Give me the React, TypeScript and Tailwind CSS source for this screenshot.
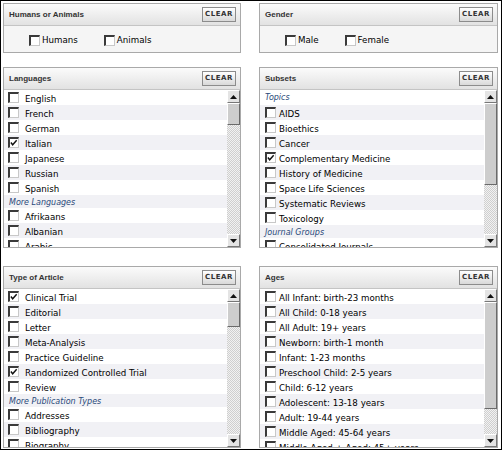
import React from 'react';

type Row = { label: string; checked?: boolean; group?: boolean };

const languages: Row[] = [
  { label: 'English' },
  { label: 'French' },
  { label: 'German' },
  { label: 'Italian', checked: true },
  { label: 'Japanese' },
  { label: 'Russian' },
  { label: 'Spanish' },
  { label: 'More Languages', group: true },
  { label: 'Afrikaans' },
  { label: 'Albanian' },
  { label: 'Arabic' },
];

const subsets: Row[] = [
  { label: 'Topics', group: true },
  { label: 'AIDS' },
  { label: 'Bioethics' },
  { label: 'Cancer' },
  { label: 'Complementary Medicine', checked: true },
  { label: 'History of Medicine' },
  { label: 'Space Life Sciences' },
  { label: 'Systematic Reviews' },
  { label: 'Toxicology' },
  { label: 'Journal Groups', group: true },
  { label: 'Consolidated Journals' },
];

const articleTypes: Row[] = [
  { label: 'Clinical Trial', checked: true },
  { label: 'Editorial' },
  { label: 'Letter' },
  { label: 'Meta-Analysis' },
  { label: 'Practice Guideline' },
  { label: 'Randomized Controlled Trial', checked: true },
  { label: 'Review' },
  { label: 'More Publication Types', group: true },
  { label: 'Addresses' },
  { label: 'Bibliography' },
  { label: 'Biography' },
];

const ages: Row[] = [
  { label: 'All Infant: birth-23 months' },
  { label: 'All Child: 0-18 years' },
  { label: 'All Adult: 19+ years' },
  { label: 'Newborn: birth-1 month' },
  { label: 'Infant: 1-23 months' },
  { label: 'Preschool Child: 2-5 years' },
  { label: 'Child: 6-12 years' },
  { label: 'Adolescent: 13-18 years' },
  { label: 'Adult: 19-44 years' },
  { label: 'Middle Aged: 45-64 years' },
  { label: 'Middle Aged + Aged: 45+ years' },
];

function Box({ checked }: { checked?: boolean }) {
  return (
    <span className="relative block w-[11px] h-[11px] shrink-0 bg-white border-t-2 border-l-2 border-t-[#3a3a3a] border-l-[#3a3a3a] border-b border-r border-b-[#c8c8c8] border-r-[#c8c8c8]">
      {checked && (
        <svg viewBox="0 0 9 9" className="absolute left-0 top-0 w-[8px] h-[8px]">
          <path d="M1 4 L3 6.5 L7.5 1.5" stroke="#111" strokeWidth="1.6" fill="none" />
        </svg>
      )}
    </span>
  );
}

function Header({ title }: { title: string }) {
  return (
    <div className="h-[22px] flex items-center justify-between pl-[5px] pr-[4px] bg-gradient-to-b from-[#fbfbfb] to-[#e2e2e2] border-b border-[#c4c4c4]">
      <span className="text-[8px] font-bold text-[#333] font-['Liberation_Sans',sans-serif]">{title}</span>
      <button className="h-[15px] w-[34px] flex items-center justify-center border border-[#8c8c8c] bg-gradient-to-b from-[#ffffff] to-[#d9d9d9] text-[7px] font-bold tracking-[0.08em] text-[#333]">
        CLEAR
      </button>
    </div>
  );
}

function Arrow({ up }: { up?: boolean }) {
  return (
    <div className="h-[13px] w-[13px] flex items-center justify-center bg-[#e4e4e4] border-t border-l border-t-white border-l-white border-b border-r border-b-[#777] border-r-[#777]">
      <svg viewBox="0 0 7 4" className="w-[7px] h-[4px]">
        <path d={up ? 'M0 4 L3.5 0 L7 4 Z' : 'M0 0 L3.5 4 L7 0 Z'} fill="#111" />
      </svg>
    </div>
  );
}

function Scrollbar({ thumb }: { thumb: number }) {
  return (
    <div className="w-[13px] flex flex-col shrink-0">
      <Arrow up />
      <div className="flex-1 bg-[repeating-conic-gradient(#cfcfcf_0_25%,#f2f2f2_0_50%)] bg-[length:2px_2px]">
        <div
          className="bg-[#cdcdcd] border-t border-l border-t-white border-l-white border-b border-r border-b-[#6a6a6a] border-r-[#6a6a6a]"
          style={{ height: thumb }}
        />
      </div>
      <Arrow />
    </div>
  );
}

function ListPanel({
  title,
  rows,
  thumb,
  wide,
  height,
}: {
  title: string;
  rows: Row[];
  thumb: number;
  wide?: boolean;
  height: number;
}) {
  return (
    <div className="flex flex-col border border-[#a9a9a9] bg-white" style={{ height }}>
      <Header title={title} />
      <div className="flex-1 flex min-h-0">
        <div className="flex-1 overflow-hidden">
          {rows.map((r, i) =>
            r.group ? (
              <div
                key={r.label}
                className={`${i === 0 ? 'h-[15px]' : 'h-[13px]'} pl-[5px] pt-[3px] leading-[10px] text-[8px] italic text-[#2a4a7a] ${i % 2 ? 'bg-[#f1f1f5]' : 'bg-white'}`}
              >
                {r.label}
              </div>
            ) : (
              <div
                key={r.label}
                className={`h-[15px] flex items-start ${wide ? 'pl-[5px]' : 'pl-[4px]'} ${i % 2 ? 'bg-[#f1f1f5]' : 'bg-white'}`}
              >
                <span className="mt-[2px]">
                  <Box checked={r.checked} />
                </span>
                <span
                  className={`mt-[4px] leading-[10px] text-[8.7px] text-black whitespace-nowrap ${wide ? 'ml-[3px]' : 'ml-[6px]'}`}
                >
                  {r.label}
                </span>
              </div>
            ),
          )}
        </div>
        <Scrollbar thumb={thumb} />
      </div>
    </div>
  );
}

function TopPanel({ title, options }: { title: string; options: string[] }) {
  return (
    <div className="h-[50px] flex flex-col border border-[#a9a9a9] bg-[#f5f5f5]">
      <Header title={title} />
      <div className="flex-1 flex items-center pt-[3px] pl-[25px] gap-[26px]">
        {options.map((o) => (
          <label key={o} className="flex items-center gap-[2px]">
            <Box />
            <span className="text-[8.7px] text-black">{o}</span>
          </label>
        ))}
      </div>
    </div>
  );
}

export default function App() {
  return (
    <div className="w-[502px] h-[450px] border border-black bg-white font-['DejaVu_Sans',sans-serif] overflow-hidden">
      <div className="grid grid-cols-[238px_239px] gap-x-[18px] pl-[2px] pt-[2px]">
        <TopPanel title="Humans or Animals" options={['Humans', 'Animals']} />
        <TopPanel title="Gender" options={['Male', 'Female']} />
      </div>
      <div className="grid grid-cols-[238px_239px] gap-x-[18px] pl-[2px] mt-[14px]">
        <ListPanel title="Languages" rows={languages} thumb={22} height={181} />
        <ListPanel title="Subsets" rows={subsets} thumb={82} wide height={181} />
      </div>
      <div className="grid grid-cols-[238px_239px] gap-x-[18px] pl-[2px] mt-[18px]">
        <ListPanel title="Type of Article" rows={articleTypes} thumb={25} height={182} />
        <ListPanel title="Ages" rows={ages} thumb={107} wide height={182} />
      </div>
    </div>
  );
}
